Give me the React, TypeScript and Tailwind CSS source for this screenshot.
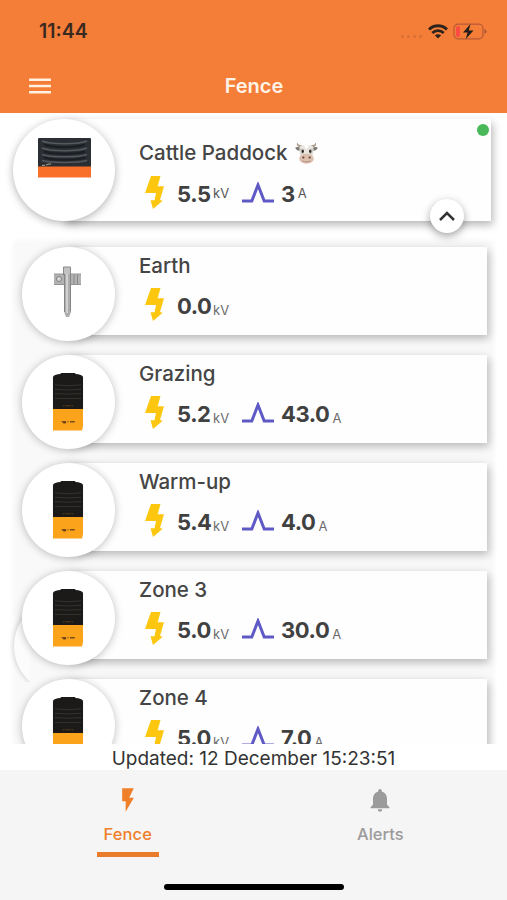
import { MdFlashOn, MdNotifications } from 'react-icons/md'

type Zone = {
  name: string
  device: 'stake' | 'energizer'
  kv: string
  amps?: string
}

const zones: Zone[] = [
  { name: 'Earth', device: 'stake', kv: '0.0' },
  { name: 'Grazing', device: 'energizer', kv: '5.2', amps: '43.0' },
  { name: 'Warm-up', device: 'energizer', kv: '5.4', amps: '4.0' },
  { name: 'Zone 3', device: 'energizer', kv: '5.0', amps: '30.0' },
  { name: 'Zone 4', device: 'energizer', kv: '5.0', amps: '7.0' },
]

function BoltIcon() {
  return (
    <svg width="19" height="33" viewBox="0 0 19 33" fill="#fdc70f" className="shrink-0">
      <path d="M6 0h9.500l-2.800 10.200H19L15 24l2.700.7L8 33 5.500 24.300h4L11 17H0z" />
    </svg>
  )
}

function PulseIcon() {
  return (
    <svg width="32" height="21" viewBox="0 0 32 21" fill="none" stroke="#5f59c6" strokeWidth="3" className="shrink-0">
      <path d="M0 19h9.800L16 3 22.200 19H32" />
    </svg>
  )
}

function CowIcon() {
  return (
    <svg width="23" height="23" viewBox="0 0 23 23">
      <path d="M4 5C1.500 4 1.500 1.500 2.500.5 3 3 5 3 7 3.200L6.500 5zM19 5c2.500-1 2.500-3.500 1.500-4.500C20 3 18 3 16 3.200l.5 1.800z" fill="#a99c8c" />
      <path d="M5.500 5.500C3 4.500 1 5 .3 6 1.500 8.500 3.500 9 5.500 8.500zM17.500 5.500c2.500-1 4.500-.5 5.200.5-1.200 2.500-3.200 3-5.200 2.500z" fill="#7d7975" />
      <path d="M5 4.500C7 2 16 2 18 4.500c1 3 .5 6-.2 9.500H5.200C4.500 10.500 4 7.500 5 4.500z" fill="#e9e6e0" />
      <path d="M9 2.500h5l-1 3-1.500 1.200L10 5.500z" fill="#fff" />
      <path d="M5 6.500l3.500.8.5 4-3 1.200zM18 6.500l-3.500.8-.5 4 3 1.200z" fill="#c8c3bc" />
      <ellipse cx="7.800" cy="9.300" rx="1.100" ry="1.700" fill="#2f2b29" />
      <ellipse cx="15.200" cy="9.300" rx="1.100" ry="1.700" fill="#2f2b29" />
      <ellipse cx="11.500" cy="16.700" rx="7.300" ry="5" fill="#ddbfae" />
      <ellipse cx="8.300" cy="15.600" rx="1.200" ry="1" fill="#69493f" />
      <ellipse cx="14.700" cy="15.600" rx="1.200" ry="1" fill="#69493f" />
      <path d="M7.500 19c2.500 1.200 5.500 1.200 8 0" fill="none" stroke="#9c7768" strokeWidth=".7" />
    </svg>
  )
}

/* wide master unit, black fins over an orange base */
function MasterUnit() {
  return (
    <svg width="53" height="40" viewBox="0 0 53 40">
      <rect width="53" height="30" rx="1" fill="#2b2f34" />
      <path d="M4 3c8 3.500 37 3.500 45 0M4 10c8 3.500 37 3.500 45 0M4 16.500c8 3 37 3 45 0M4 22.500c8 2.500 37 2.500 45 0" fill="none" stroke="#54595e" strokeWidth="1.500" />
      <path d="M6 6.500c9 3.500 32 3.500 41 0M6 13.500c9 3 32 3 41 0M6 19.500c9 3 32 3 41 0" fill="none" stroke="#1b1e22" strokeWidth="2" />
      <path d="M4 27.500l3-.3m1 0l2-1 3-.3" stroke="#cfc5ac" strokeWidth=".8" fill="none" />
      <rect y="28.500" width="53" height="11" fill="#f9702a" />
    </svg>
  )
}

function Energizer() {
  return (
    <svg width="32" height="58" viewBox="0 0 33 59" preserveAspectRatio="none">
      <path d="M1 4Q2 1.500 9 1V0h15v1q7 .5 8 3v33H1z" fill="#1b1a19" />
      <path d="M3 12q13 2 27 0M3 16.500q13 1.500 27 0M3 21q13 1 27 0M3 26h27" fill="none" stroke="#35322f" strokeWidth="1" />
      <path d="M11 33.300h2m1 0h5m1 0h2" stroke="#5e4519" strokeWidth=".9" />
      <path d="M1 36.500h31V54l-1 4.500H1z" fill="#fca31c" />
      <path d="M10 49.500h4.500m1.500 0h1m1.500 0h5" stroke="#7a4e1a" strokeWidth="1.500" />
      <path d="M11.500 50.500h3" stroke="#6b431b" strokeWidth="1.600" />
    </svg>
  )
}

function EarthStake() {
  return (
    <svg width="28" height="52" viewBox="0 0 28 52">
      <path d="M0 8h27v11H0z" fill="#b2b2b2" />
      <path d="M0 8h27M0 18.500h27" stroke="#949494" />
      <circle cx="5" cy="13" r="2.500" fill="#d6d6d6" stroke="#808080" />
      <path d="M20 9v9M23.500 9v9" stroke="#888" />
      <path d="M9.500 1h7v8h-7z" fill="#c2c2c2" stroke="#888" />
      <path d="M10 8h7v38l-2 5h-3l-1.500-4z" fill="#adadad" />
      <path d="M10.500 8v38M16.500 8v37" stroke="#858585" />
      <path d="M13 8v39" stroke="#dcdcdc" strokeWidth="1.500" />
    </svg>
  )
}

function Readings({ kv, amps, raised }: { kv: string; amps?: string; raised?: boolean }) {
  const unit = raised ? 'text-[13px] leading-4 text-[#555]' : 'text-[13px] leading-4 pt-[10px] text-[#6c6c6c]'
  return (
    <div className="flex h-[33px] items-center pl-[6px] text-[#414141]">
      <BoltIcon />
      <span className="ml-[13px] w-[36px] pt-0.5 text-[22px] leading-7 font-bold tracking-[-0.4px]">{kv}</span>
      <span className={`${unit} w-[29px]`}>kV</span>
      {amps && (
        <>
          <PulseIcon />
          <span className="ml-[7px] pt-0.5 text-[22px] leading-7 font-bold tracking-[-0.4px]">{amps}</span>
          <span className={`${unit} ml-[3px]`}>A</span>
        </>
      )}
    </div>
  )
}

function ZoneRow({ zone }: { zone: Zone }) {
  return (
    <div className="mb-[14px] flex h-[94px] shrink-0 pr-5 pl-[22px]">
      <div className="z-10 flex w-[93px] shrink-0 items-center justify-center rounded-full bg-white pr-px shadow-[0_1px_9px_rgba(0,0,0,0.26)]">
        {zone.device === 'stake' ? <div className="pb-1"><EarthStake /></div> : <Energizer />}
      </div>
      <div className="z-[1] -ml-[47px] h-[88px] flex-1 bg-[#fefefe] pt-[7px] pl-[71px] shadow-[2px_4px_8px_rgba(0,0,0,0.22),0_0_12px_rgba(0,0,0,0.06)]">
        <div className="mb-[10px] h-6 text-[20.5px] leading-6 font-medium text-[#454545]">{zone.name}</div>
        <Readings kv={zone.kv} amps={zone.amps} />
      </div>
    </div>
  )
}

function StatusBar() {
  return (
    <div className="flex h-[62px] items-center justify-between pr-5 pl-[39px] text-[#3a2920]">
      <span className="pt-0.5 text-[19.5px] font-semibold">11:44</span>
      <div className="flex items-center">
        <div className="mt-2.5 mr-[6px] flex gap-[3px]">
          {[0, 1, 2, 3].map(i => (
            <span key={i} className="size-[3px] rounded-full bg-[#d96e37]" />
          ))}
        </div>
        <svg width="20" height="15" viewBox="0 0 20 15" fill="none" stroke="#2e241e" strokeWidth="2.800">
          <path d="M1 5.500C6 .5 14 .5 19 5.500M4.300 9C7.500 5.800 12.500 5.800 15.700 9" />
          <path d="M10 14.500L6.800 11.300q3.200-2.300 6.400 0z" fill="#2e241e" stroke="none" />
        </svg>
        <svg width="34" height="17" viewBox="0 0 34 17" className="ml-[5px]">
          <rect x="1" y="1.200" width="29" height="14.600" rx="4" fill="none" stroke="#b65a35" strokeWidth="1.200" />
          <rect x="3" y="3.200" width="4" height="10.600" rx="1.500" fill="#fb4b43" />
          <path d="M31.500 6v5q2-.8 2-2.500t-2-2.500z" fill="#a75534" />
          <path d="M17.500 1L10 9.500h4.500L12.800 16 20.500 7.500h-4.700z" fill="#241e1b" />
        </svg>
      </div>
    </div>
  )
}

export default function App() {
  return (
    <div className="flex h-[900px] w-[507px] flex-col overflow-hidden bg-white font-['Inter','Liberation_Sans',sans-serif]">
      <header className="h-[113px] shrink-0 bg-[#f47e38]">
        <StatusBar />
        <div className="grid h-[48px] grid-cols-3 items-center pl-[29px]">
          <svg width="22" height="16" viewBox="0 0 22 16" stroke="#fff0df" strokeWidth="2.600">
            <path d="M0 1.700h22M0 8h22M0 14.300h22" />
          </svg>
          <h1 className="-ml-[3px] pr-[25px] text-center text-[20px] font-semibold text-[#fff3e7]">Fence</h1>
        </div>
      </header>

      <main className="flex min-h-0 flex-1 flex-col overflow-hidden pt-[6px]">
        {/* master unit */}
        <div className="relative z-10 flex h-[102px] shrink-0 pr-4 pl-[13px]">
          <div className="z-10 flex w-[102px] shrink-0 items-start justify-center rounded-full bg-white pt-[19px] shadow-[0_2px_9px_rgba(0,0,0,0.3)]">
            <MasterUnit />
          </div>
          <div className="-ml-[51px] flex-1 bg-[#fefefe] pt-[22px] pl-[75px] shadow-[2px_4px_8px_rgba(0,0,0,0.28)]">
            <div className="mb-[11px] flex h-6 items-center gap-[8px] text-[20.5px] leading-6 font-medium text-[#454545]">
              Cattle Paddock
              <CowIcon />
            </div>
            <Readings kv="5.5" amps="3" raised />
          </div>
          <span className="absolute top-[5px] right-[18px] size-3 rounded-full bg-[#48b858]" />
          <button className="absolute top-[80px] right-[43px] flex size-[34px] items-center justify-center rounded-full bg-white shadow-[0_3px_8px_rgba(0,0,0,0.36)]">
            <svg width="16" height="10" viewBox="0 0 16 10" fill="none" stroke="#333" strokeWidth="2.500">
              <path d="M1 9l7-7 7 7" />
            </svg>
          </button>
        </div>

        {/* zones */}
        <div className="relative mx-[15px] mt-[21px] -mb-6 min-h-0 flex-1 bg-[#f9f9f9] shadow-[0_0_7px_rgba(0,0,0,0.05)]">
          {/* collapsed circle showing from behind the stack */}
          <div className="absolute top-[360px] -left-[9px] h-[80px] w-[24px] overflow-hidden">
            <span className="absolute -top-[4px] left-[8px] size-[96px] rounded-full bg-[#fcfcfc] shadow-[-1px_0_5px_rgba(0,0,0,0.16)]" />
          </div>
          <div className="relative -mx-[15px] flex flex-col pt-[5px]">
            {zones.map(zone => (
              <ZoneRow key={zone.name} zone={zone} />
            ))}
          </div>
        </div>
      </main>

      <div className="z-20 h-[26px] shrink-0 bg-white text-center text-[19px] leading-[29px] text-[#333]">
        Updated: 12 December 15:23:51
      </div>

      <nav className="z-20 flex h-[130px] shrink-0 flex-col items-center bg-[#f5f5f5]">
        <div className="grid h-[114px] w-full grid-cols-2">
          <div className="flex flex-col items-center pt-4 pl-0.5 text-[#ef7f29]">
            <MdFlashOn className="size-7" />
            <span className="mt-[8px] text-[16.5px] leading-6 font-medium tracking-[0.1px]">Fence</span>
            <span className="mt-[6px] h-[5px] w-[62px] bg-[#ea7b2b]" />
          </div>
          <div className="flex flex-col items-center pt-4 text-[#9b9b9b]">
            <MdNotifications className="size-7" />
            <span className="mt-[8px] text-[16.5px] leading-6 font-medium">Alerts</span>
          </div>
        </div>
        <span className="h-[6px] w-[180px] rounded-full bg-black" />
      </nav>
    </div>
  )
}
